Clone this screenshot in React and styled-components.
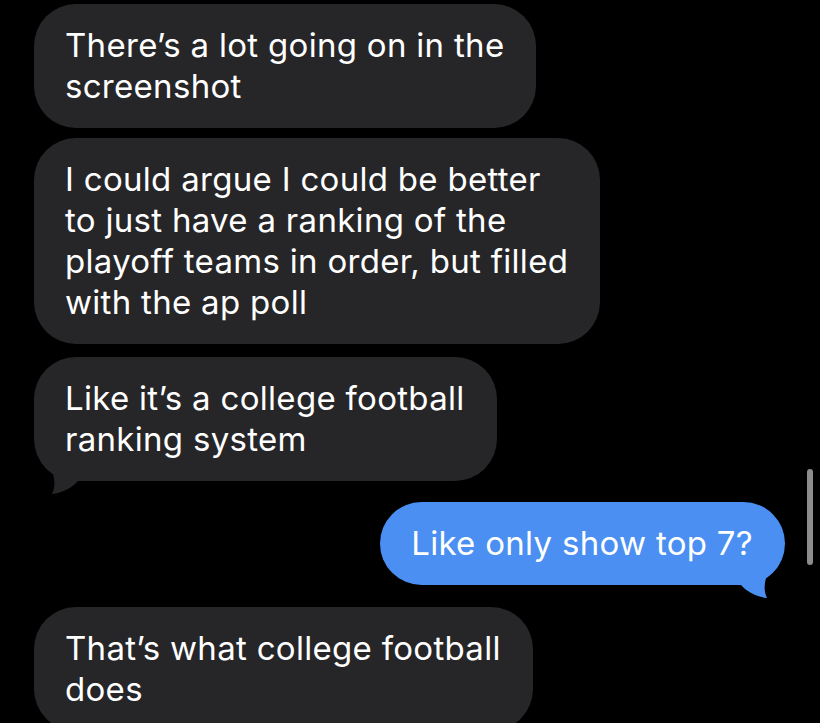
import React from 'react';
import styled, { createGlobalStyle } from 'styled-components';

const colors = {
  bg: '#000000',
  received: '#262628',
  sent: '#4a8ff1',
  text: '#ffffff',
  scroll: '#8c8c8e',
};

const GlobalStyle = createGlobalStyle`
  html, body {
    margin: 0;
    padding: 0;
    background: ${colors.bg};
    height: 723px;
    overflow: hidden;
  }
`;

const Thread = styled.div`
  position: relative;
  height: 723px;
  overflow: hidden;
  display: flex;
  flex-direction: column;
  padding: 4px 35px 0 34px;
  box-sizing: border-box;
  font-family: Inter, 'Liberation Sans', sans-serif;
`;

const Bubble = styled.div`
  position: relative;
  isolation: isolate;
  align-self: ${(p) => (p.$sent ? 'flex-end' : 'flex-start')};
  background: ${(p) => (p.$sent ? colors.sent : colors.received)};
  color: ${colors.text};
  font-size: 33px;
  line-height: 41px;
  letter-spacing: 0.3px;
  padding: 21px 32px 21px 31px;
  border-radius: 42px;
  margin-bottom: ${(p) => p.$gap}px;
  white-space: nowrap;

  svg {
    position: absolute;
    z-index: -1;
    bottom: -16px;
    width: 60px;
    height: 56px;
    ${(p) => (p.$sent ? 'right: 0; transform: scaleX(-1);' : 'left: 0;')}
  }
`;

const Scrollbar = styled.div`
  position: absolute;
  right: 7px;
  top: 469px;
  width: 6px;
  height: 96px;
  border-radius: 3px;
  background: ${colors.scroll};
`;

const Tail = ({ color }) => (
  <svg viewBox="0 0 60 56">
    <path
      d="M1,0 C2,14 7,25 19,33 C21,40 21,47 18,53 C28,52 38,47 44,40 L60,40 L60,0 Z"
      fill={color}
    />
  </svg>
);

const messages = [
  { lines: ["There\u2019s a lot going on in the", 'screenshot'], gap: 10 },
  {
    lines: [
      'I could argue I could be better',
      'to just have a ranking of the',
      'playoff teams in order, but filled',
      'with the ap poll',
    ],
    gap: 13,
  },
  { lines: ["Like it\u2019s a college football", 'ranking system'], gap: 21, tail: true },
  { lines: ['Like only show top 7?'], gap: 22, tail: true, sent: true },
  { lines: ["That\u2019s what college football", 'does'], gap: 0 },
];

export default function App() {
  return (
    <>
      <GlobalStyle />
      <Thread>
        {messages.map((m, i) => (
          <Bubble key={i} $sent={m.sent} $gap={m.gap}>
            {m.lines.map((l, j) => (
              <React.Fragment key={j}>
                {j > 0 && <br />}
                {l}
              </React.Fragment>
            ))}
            {m.tail && <Tail color={m.sent ? colors.sent : colors.received} />}
          </Bubble>
        ))}
        <Scrollbar />
      </Thread>
    </>
  );
}
